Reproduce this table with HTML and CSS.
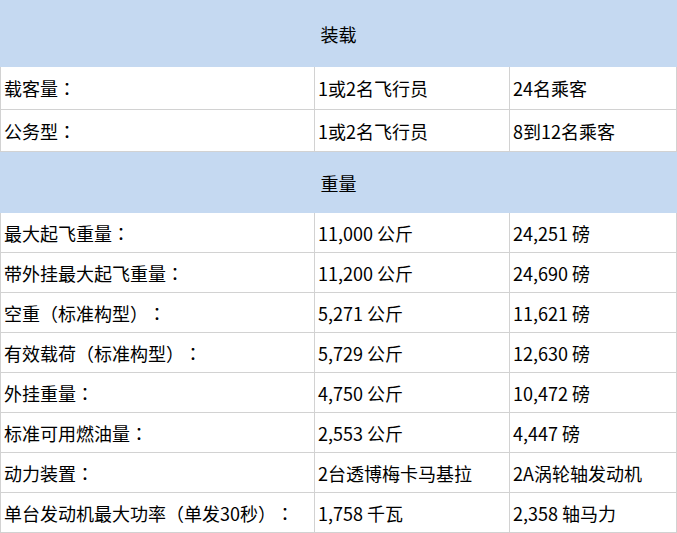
FILE: index.html
```html
<!DOCTYPE html>
<html lang="zh-CN">
<head>
<meta charset="utf-8">
<title>规格</title>
<link rel="stylesheet" href="styles.css">
</head>
<body>
<div class="spec">
  <div class="section section-tall">装载</div>
  <div class="row row-a"><div class="cell">载客量<span class="punct">：</span></div><div class="cell">1或2名飞行员</div><div class="cell">24名乘客</div></div>
  <div class="row row-b"><div class="cell">公务型<span class="punct">：</span></div><div class="cell">1或2名飞行员</div><div class="cell">8到12名乘客</div></div>
  <div class="section section-short">重量</div>
  <div class="row"><div class="cell">最大起飞重量<span class="punct">：</span></div><div class="cell">11,000 公斤</div><div class="cell">24,251 磅</div></div>
  <div class="row"><div class="cell">带外挂最大起飞重量<span class="punct">：</span></div><div class="cell">11,200 公斤</div><div class="cell">24,690 磅</div></div>
  <div class="row"><div class="cell">空重<span class="punct">（</span>标准构型<span class="punct">）：</span></div><div class="cell">5,271 公斤</div><div class="cell">11,621 磅</div></div>
  <div class="row"><div class="cell">有效载荷<span class="punct">（</span>标准构型<span class="punct">）：</span></div><div class="cell">5,729 公斤</div><div class="cell">12,630 磅</div></div>
  <div class="row"><div class="cell">外挂重量<span class="punct">：</span></div><div class="cell">4,750 公斤</div><div class="cell">10,472 磅</div></div>
  <div class="row"><div class="cell">标准可用燃油量<span class="punct">：</span></div><div class="cell">2,553 公斤</div><div class="cell">4,447 磅</div></div>
  <div class="row"><div class="cell">动力装置<span class="punct">：</span></div><div class="cell">2台透博梅卡马基拉</div><div class="cell">2A涡轮轴发动机</div></div>
  <div class="row"><div class="cell">单台发动机最大功率<span class="punct">（</span>单发30秒<span class="punct">）：</span></div><div class="cell">1,758 千瓦</div><div class="cell">2,358 轴马力</div></div>
</div>
</body>
</html>
```
FILE: styles.css
```css
html, body {
  margin: 0;
  padding: 0;
  background: #ffffff;
}
body {
  font-family: "Noto Sans CJK SC", "Noto Sans", sans-serif;
  font-size: 18px;
  color: #000000;
  text-spacing-trim: space-all;
}
.spec {
  width: 677px;
  display: flex;
  flex-direction: column;
}
.section {
  background: #c5d9f1;
  display: flex;
  align-items: center;
  justify-content: center;
  color: #000000;
}
.section-tall {
  height: 67px;
}
.section-short {
  height: 61px;
}
.row {
  display: grid;
  grid-template-columns: 314px 195px 167px;
  height: 40px;
  border-left: 1px solid #d2d2d2;
  box-sizing: border-box;
}
.row-a {
  height: 43px;
}
.row-b {
  height: 42px;
}
.cell {
  display: flex;
  align-items: center;
  padding-left: 3px;
  border-right: 1px solid #d2d2d2;
  border-bottom: 1px solid #d2d2d2;
  white-space: pre;
  line-height: 1;
}
.punct {
  font-family: "Noto Sans CJK JP", "Noto Sans CJK SC", sans-serif;
}
```
